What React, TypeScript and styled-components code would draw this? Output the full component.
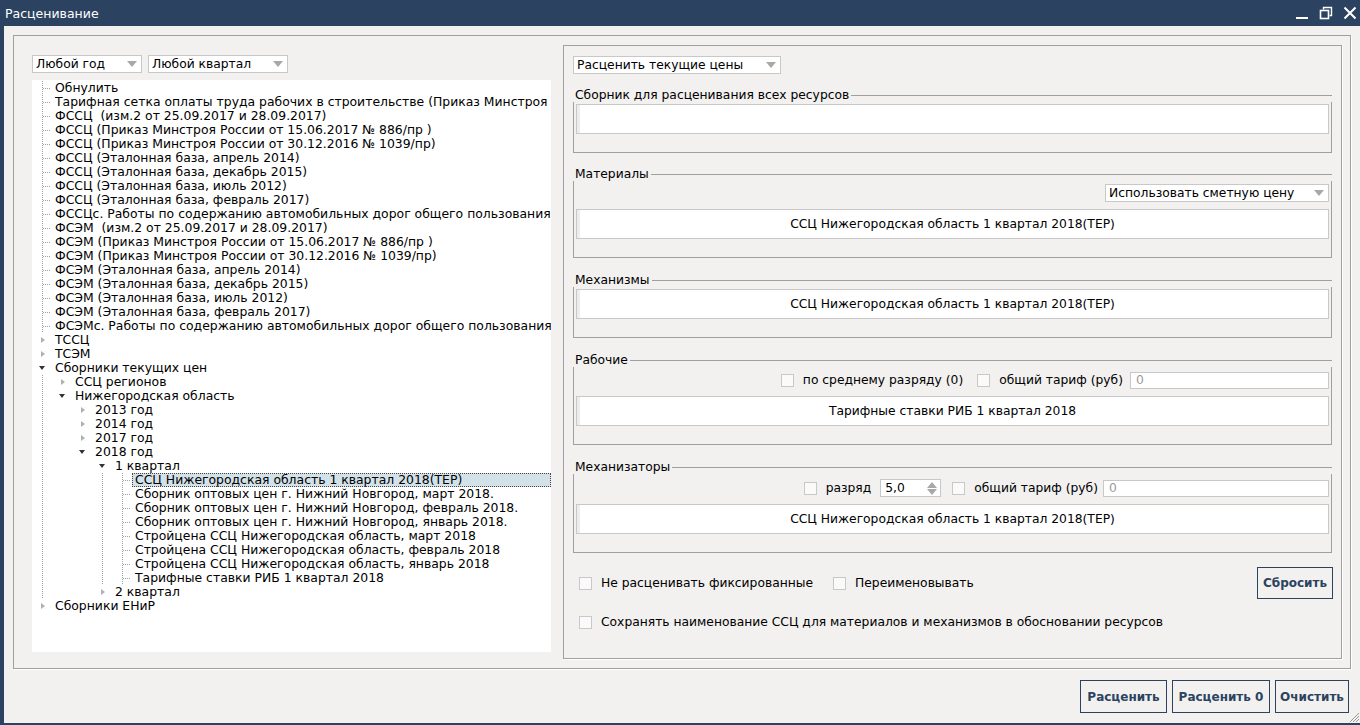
import React from "react";
import styled, { createGlobalStyle } from "styled-components";

const NAVY = "#2b4360";
const LINE = "#a0a0a0";

const GlobalStyle = createGlobalStyle`
  html, body { margin: 0; padding: 0; background: ${NAVY}; }
  body { font-family: "DejaVu Sans", "Noto Sans", sans-serif; font-size: 12.3px; color: #000; }
  * { box-sizing: border-box; }
`;

interface TreeNode {
    label: string;
    open?: boolean;
    selected?: boolean;
    children?: TreeNode[];
}

interface FlatRow {
    node: TreeNode;
    guides: boolean[];
    last: boolean;
}

const leaf = (label: string, selected = false): TreeNode => ({ label, selected });
const closed = (label: string): TreeNode => ({ label, children: [] });

const tree: TreeNode[] = [
    leaf("Обнулить"),
    leaf("Тарифная сетка оплаты труда рабочих в строительстве (Приказ Минстроя России от 15.06.2017)"),
    leaf("ФССЦ  (изм.2 от 25.09.2017 и 28.09.2017)"),
    leaf("ФССЦ (Приказ Минстроя России от 15.06.2017 № 886/пр )"),
    leaf("ФССЦ (Приказ Минстроя России от 30.12.2016 № 1039/пр)"),
    leaf("ФССЦ (Эталонная база, апрель 2014)"),
    leaf("ФССЦ (Эталонная база, декабрь 2015)"),
    leaf("ФССЦ (Эталонная база, июль 2012)"),
    leaf("ФССЦ (Эталонная база, февраль 2017)"),
    leaf("ФССЦс. Работы по содержанию автомобильных дорог общего пользования"),
    leaf("ФСЭМ  (изм.2 от 25.09.2017 и 28.09.2017)"),
    leaf("ФСЭМ (Приказ Минстроя России от 15.06.2017 № 886/пр )"),
    leaf("ФСЭМ (Приказ Минстроя России от 30.12.2016 № 1039/пр)"),
    leaf("ФСЭМ (Эталонная база, апрель 2014)"),
    leaf("ФСЭМ (Эталонная база, декабрь 2015)"),
    leaf("ФСЭМ (Эталонная база, июль 2012)"),
    leaf("ФСЭМ (Эталонная база, февраль 2017)"),
    leaf("ФСЭМс. Работы по содержанию автомобильных дорог общего пользования"),
    closed("ТССЦ"),
    closed("ТСЭМ"),
    {
        label: "Сборники текущих цен",
        open: true,
        children: [
            closed("ССЦ регионов"),
            {
                label: "Нижегородская область",
                open: true,
                children: [
                    closed("2013 год"),
                    closed("2014 год"),
                    closed("2017 год"),
                    {
                        label: "2018 год",
                        open: true,
                        children: [
                            {
                                label: "1 квартал",
                                open: true,
                                children: [
                                    leaf("ССЦ Нижегородская область 1 квартал 2018(ТЕР)", true),
                                    leaf("Сборник оптовых цен г. Нижний Новгород, март 2018."),
                                    leaf("Сборник оптовых цен г. Нижний Новгород, февраль 2018."),
                                    leaf("Сборник оптовых цен г. Нижний Новгород, январь 2018."),
                                    leaf("Стройцена ССЦ Нижегородская область, март 2018"),
                                    leaf("Стройцена ССЦ Нижегородская область, февраль 2018"),
                                    leaf("Стройцена ССЦ Нижегородская область, январь 2018"),
                                    leaf("Тарифные ставки РИБ 1 квартал 2018"),
                                ],
                            },
                            closed("2 квартал"),
                        ],
                    },
                ],
            },
        ],
    },
    closed("Сборники ЕНиР"),
];

const flatten = (nodes: TreeNode[], guides: boolean[], out: FlatRow[]) => {
    nodes.forEach((node, i) => {
        const last = i === nodes.length - 1;
        out.push({ node, guides, last });
        if (node.children && node.open) flatten(node.children, [...guides, !last], out);
    });
    return out;
};

// dotted tree lines, drawn as 1px dashes every 2px
const dotsV = `linear-gradient(to bottom, ${LINE} 50%, transparent 50%) 10px 0 / 1px 2px repeat-y`;
const dotH = (x: number) => `linear-gradient(to right, ${LINE} 50%, transparent 50%) ${x}px 7px / 2px 1px no-repeat`;

/* ---------- window chrome ---------- */

const Window = styled.div`
  width: 1360px;
  height: 725px;
  display: flex;
  flex-direction: column;
  background: ${NAVY};
  overflow: hidden;
`;

const TitleBar = styled.div`
  height: 26px;
  flex: none;
  display: flex;
  align-items: center;
  padding: 0 3px 0 5px;
  color: #fff;
  font-size: 12.5px;
`;

const Title = styled.div`
  flex: 1;
`;

const WinButtons = styled.div`
  display: flex;
  align-items: center;
  gap: 10px;
`;

const Body = styled.div`
  position: relative;
  flex: 1;
  margin: 0 0 2px 4px;
  background: #f2f1ef;
  padding: 9px 9px 0 9px;
  display: flex;
  flex-direction: column;
`;

const Grip = styled.svg`
  position: absolute;
  right: 0;
  bottom: 0;
`;

const Outer = styled.div`
  flex: none;
  height: 634px;
  border: 1px solid ${LINE};
  box-shadow: 1px 1px 0 #fff;
  display: flex;
  gap: 12px;
  padding: 9px 8px 9px 18px;
`;

/* ---------- left column ---------- */

const LeftCol = styled.div`
  width: 519px;
  flex: none;
  display: flex;
  flex-direction: column;
  padding: 10px 0 7px;
`;

const FilterRow = styled.div`
  display: flex;
  gap: 6px;
  margin-bottom: 7px;
`;

const SelectBox = styled.div<{ $w: number }>`
  width: ${p => p.$w}px;
  height: 18px;
  flex: none;
  background: #fff;
  border: 1px solid #c8c8c8;
  display: flex;
  align-items: center;
  padding: 0 4px 0 3px;
  white-space: nowrap;
  line-height: 16px;
`;

const SelectText = styled.span`
  flex: 1;
`;

const DownArrow = styled.span`
  width: 0;
  height: 0;
  border-left: 5px solid transparent;
  border-right: 5px solid transparent;
  border-top: 6px solid #a8a8a8;
`;

const Tree = styled.div`
  flex: 1;
  background: #fff;
  overflow: hidden;
  padding-top: 1px;
  font-size: 12.4px;
`;

const TreeRow = styled.div`
  height: 14px;
  display: flex;
  align-items: stretch;
  white-space: pre;
  line-height: 14px;
`;

const Guide = styled.div<{ $line: boolean }>`
  width: 20px;
  flex: none;
  background: ${p => (p.$line ? dotsV : "none")};
`;

const Branch = styled.div<{ $leaf: boolean; $last: boolean }>`
  width: 20px;
  flex: none;
  display: flex;
  align-items: center;
  justify-content: center;
  ${p =>
      p.$leaf &&
      `background: ${dotH(11)}, ${dotH(13)}, ${dotH(15)}, ${dotH(17)}, ${dotsV};
       ${p.$last ? "background-size: 2px 1px, 2px 1px, 2px 1px, 2px 1px, 1px 2px;" : ""}`}
`;

const Collapsed = styled.span`
  width: 0;
  height: 0;
  border-top: 3.5px solid transparent;
  border-bottom: 3.5px solid transparent;
  border-left: 4px solid #b0b0b0;
  margin-left: 1px;
`;

const Expanded = styled.span`
  width: 0;
  height: 0;
  border-left: 3.5px solid transparent;
  border-right: 3.5px solid transparent;
  border-top: 4px solid #333;
`;

const NodeLabel = styled.div<{ $selected?: boolean }>`
  padding: 0 3px;
  ${p =>
      p.$selected &&
      `flex: 1;
       background: #d3e1e9;
       outline: 1px dotted #444;
       outline-offset: -1px;`}
`;

/* ---------- right panel ---------- */

const RightPanel = styled.div`
  flex: 1;
  border: 1px solid ${LINE};
  box-shadow: 1px 1px 0 #fff;
  padding: 10px 9px 0;
  display: flex;
  flex-direction: column;
`;

const Group = styled.div<{ $top: number }>`
  margin-top: ${p => p.$top}px;
  display: flex;
  flex-direction: column;
`;

const GroupHead = styled.div`
  height: 14px;
  display: flex;
  align-items: center;
  padding-left: 2px;
  white-space: nowrap;
  line-height: 14px;
  &::after {
    content: "";
    flex: 1;
    height: 0;
    border-top: 1px solid ${LINE};
    margin-left: 2px;
  }
`;

const GroupBody = styled.div<{ $pt: number }>`
  border: 1px solid ${LINE};
  border-top: none;
  padding: ${p => p.$pt}px 2px 18px;
  display: flex;
  flex-direction: column;
  gap: 7px;
`;

const Field = styled.div`
  height: 30px;
  background: #fff;
  border: 1px solid #c8c8c8;
  box-shadow: inset 3px 0 0 #ededed;
  display: flex;
  align-items: center;
  justify-content: center;
  white-space: nowrap;
`;

const ControlRow = styled.div`
  height: 18px;
  display: flex;
  align-items: center;
  justify-content: flex-end;
  white-space: nowrap;
`;

const Check = styled.span<{ $ml?: number }>`
  width: 13px;
  height: 13px;
  flex: none;
  border: 1px solid #c8c8c8;
  background: #fafafa;
  margin-left: ${p => p.$ml ?? 0}px;
`;

const CheckText = styled.span<{ $ml?: number }>`
  margin-left: ${p => p.$ml ?? 9}px;
`;

const TextInput = styled.div<{ $w: number; $ml: number }>`
  width: ${p => p.$w}px;
  height: 17px;
  margin-left: ${p => p.$ml}px;
  background: #fff;
  border: 1px solid #c8c8c8;
  color: #999;
  padding-left: 5px;
  line-height: 15px;
`;

const Spin = styled.div`
  width: 61px;
  height: 18px;
  margin-left: 9px;
  background: #fff;
  border: 1px solid #c8c8c8;
  display: flex;
  align-items: center;
  padding: 0 3px 0 4px;
`;

const SpinValue = styled.span`
  flex: 1;
`;

const SpinArrows = styled.span`
  display: flex;
  flex-direction: column;
  gap: 1px;
`;

const SpinUp = styled.span`
  width: 0;
  height: 0;
  border-left: 5px solid transparent;
  border-right: 5px solid transparent;
  border-bottom: 6px solid #a8a8a8;
`;

const SpinDown = styled(SpinUp)`
  border-bottom: none;
  border-top: 6px solid #a8a8a8;
`;

const OptionRow = styled.div<{ $top: number; $h: number }>`
  margin-top: ${p => p.$top}px;
  height: ${p => p.$h}px;
  display: flex;
  align-items: center;
  padding-left: 6px;
  white-space: nowrap;
`;

const ActionButton = styled.button<{ $w: number }>`
  width: ${p => p.$w}px;
  height: 32px;
  flex: none;
  border: 1px solid ${NAVY};
  background: transparent;
  color: ${NAVY};
  font-family: "DejaVu Sans", "Noto Sans", sans-serif;
  font-weight: bold;
  font-size: 12px;
  padding: 0;
  margin-left: auto;
  margin-right: -1px;
`;

const Footer = styled.div`
  height: 33px;
  margin: 11px 0 10px;
  padding-right: 2px;
  display: flex;
  justify-content: flex-end;
  gap: 5px;
`;

const FooterButton = styled(ActionButton)`
  height: 33px;
  margin: 0;
`;

/* ---------- small parts ---------- */

const Select: React.FC<{ w: number; text: string }> = ({ w, text }) => (
    <SelectBox $w={w}>
        <SelectText>{text}</SelectText>
        <DownArrow />
    </SelectBox>
);

const Section: React.FC<{ title: string; top: number; pt?: number; children: React.ReactNode }> = ({
    title,
    top,
    pt = 2,
    children,
}) => (
    <Group $top={top}>
        <GroupHead>{title}</GroupHead>
        <GroupBody $pt={pt}>{children}</GroupBody>
    </Group>
);

const rows = flatten(tree, [], []);

export default function App() {
    return (
        <Window>
            <GlobalStyle />
            <TitleBar>
                <Title>Расценивание</Title>
                <WinButtons>
                    <svg width="14" height="14" viewBox="0 0 14 14">
                        <rect x="1" y="11" width="12" height="2" fill="#fff" />
                    </svg>
                    <svg width="14" height="14" viewBox="0 0 14 14">
                        <path d="M4.5 3.5V1.5H12.5V9.5H10.5" fill="none" stroke="#fff" strokeWidth="1.4" />
                        <rect x="1.5" y="4.5" width="8" height="8" fill="none" stroke="#fff" strokeWidth="1.6" />
                    </svg>
                    <svg width="14" height="14" viewBox="0 0 14 14">
                        <path d="M1.5 1.5L12.5 12.5M12.5 1.5L1.5 12.5" stroke="#fff" strokeWidth="2" />
                    </svg>
                </WinButtons>
            </TitleBar>

            <Body>
                <Outer>
                    <LeftCol>
                        <FilterRow>
                            <Select w={110} text="Любой год" />
                            <Select w={140} text="Любой квартал" />
                        </FilterRow>
                        <Tree>
                            {rows.map((r, i) => {
                                const hasKids = !!r.node.children;
                                return (
                                    <TreeRow key={i}>
                                        {r.guides.map((g, j) => (
                                            <Guide key={j} $line={g} />
                                        ))}
                                        <Branch $leaf={!hasKids} $last={r.last}>
                                            {hasKids && (r.node.open ? <Expanded /> : <Collapsed />)}
                                        </Branch>
                                        <NodeLabel $selected={r.node.selected}>{r.node.label}</NodeLabel>
                                    </TreeRow>
                                );
                            })}
                        </Tree>
                    </LeftCol>

                    <RightPanel>
                        <Select w={208} text="Расценить текущие цены" />

                        <Section title="Сборник для расценивания всех ресурсов" top={14}>
                            <Field />
                        </Section>

                        <Section title="Материалы" top={14} pt={3}>
                            <ControlRow>
                                <Select w={224} text="Использовать сметную цену" />
                            </ControlRow>
                            <Field>ССЦ Нижегородская область 1 квартал 2018(ТЕР)</Field>
                        </Section>

                        <Section title="Механизмы" top={15}>
                            <Field>ССЦ Нижегородская область 1 квартал 2018(ТЕР)</Field>
                        </Section>

                        <Section title="Рабочие" top={15} pt={4}>
                            <ControlRow>
                                <Check />
                                <CheckText>по среднему разряду (0)</CheckText>
                                <Check $ml={14} />
                                <CheckText>общий тариф (руб)</CheckText>
                                <TextInput $w={199} $ml={7}>0</TextInput>
                            </ControlRow>
                            <Field>Тарифные ставки РИБ 1 квартал 2018</Field>
                        </Section>

                        <Section title="Механизаторы" top={15} pt={5}>
                            <ControlRow>
                                <Check />
                                <CheckText>разряд</CheckText>
                                <Spin>
                                    <SpinValue>5,0</SpinValue>
                                    <SpinArrows>
                                        <SpinUp />
                                        <SpinDown />
                                    </SpinArrows>
                                </Spin>
                                <Check $ml={11} />
                                <CheckText>общий тариф (руб)</CheckText>
                                <TextInput $w={226} $ml={5}>0</TextInput>
                            </ControlRow>
                            <Field>ССЦ Нижегородская область 1 квартал 2018(ТЕР)</Field>
                        </Section>

                        <OptionRow $top={14} $h={32}>
                            <Check />
                            <CheckText>Не расценивать фиксированные</CheckText>
                            <Check $ml={20} />
                            <CheckText>Переименовывать</CheckText>
                            <ActionButton $w={76}>Сбросить</ActionButton>
                        </OptionRow>
                        <OptionRow $top={15} $h={16}>
                            <Check />
                            <CheckText>Сохранять наименование ССЦ для материалов и механизмов в обосновании ресурсов</CheckText>
                        </OptionRow>
                    </RightPanel>
                </Outer>

                <Footer>
                    <FooterButton $w={87}>Расценить</FooterButton>
                    <FooterButton $w={98}>Расценить 0</FooterButton>
                    <FooterButton $w={74}>Очистить</FooterButton>
                </Footer>

                <Grip width="11" height="11" viewBox="0 0 11 11">
                    <path d="M10 1L1 10M10 4L4 10M10 7L7 10" stroke="#9a9a9a" strokeWidth="1" />
                </Grip>
            </Body>
        </Window>
    );
}
